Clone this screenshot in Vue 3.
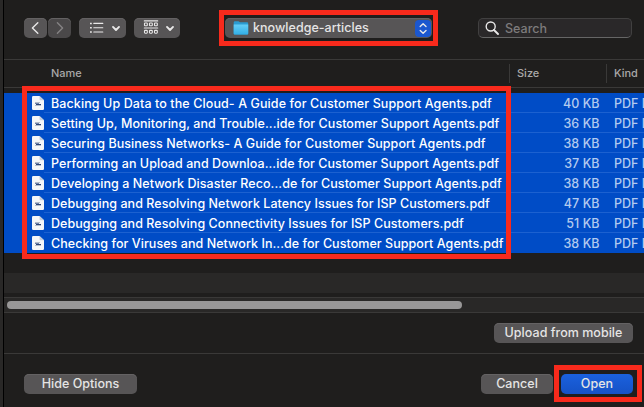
<script setup>
const files = [
  { name: 'Backing Up Data to the Cloud- A Guide for Customer Support Agents.pdf', size: '40 KB' },
  { name: 'Setting Up, Monitoring, and Trouble...ide for Customer Support Agents.pdf', size: '36 KB' },
  { name: 'Securing Business Networks- A Guide for Customer Support Agents.pdf', size: '38 KB' },
  { name: 'Performing an Upload and Downloa...ide for Customer Support Agents.pdf', size: '37 KB' },
  { name: 'Developing a Network Disaster Reco...de for Customer Support Agents.pdf', size: '38 KB' },
  { name: 'Debugging and Resolving Network Latency Issues for ISP Customers.pdf', size: '47 KB' },
  { name: 'Debugging and Resolving Connectivity Issues for ISP Customers.pdf', size: '51 KB' },
  { name: 'Checking for Viruses and Network In...de for Customer Support Agents.pdf', size: '38 KB' },
]
</script>

<template>
  <div class="window">
    <header class="toolbar">
      <button class="btn nav back">
        <svg width="23" height="20" viewBox="0 0 23 20"><path d="M13.8 4.8 8.4 10l5.4 5.2" class="stroke" /></svg>
      </button>
      <button class="btn nav forward">
        <svg width="23" height="20" viewBox="0 0 23 20"><path d="m9.4 4.8 5.2 5.2-5.2 5.2" class="stroke dim" /></svg>
      </button>
      <button class="btn view">
        <svg width="47" height="20" viewBox="0 0 47 20">
          <path d="M14.8 5.4h9M14.8 9.7h9M14.8 14h9" class="stroke thin" />
          <path d="M11 5.4h1.8M11 9.7h1.8M11 14h1.8" class="stroke bullet" />
          <path d="m34 8.9 3 3.1 3-3.1" class="stroke bold" />
        </svg>
      </button>
      <button class="btn group">
        <svg width="46" height="20" viewBox="0 0 46 20">
          <path d="M10.3 2.9h13.4M10.3 10h13.4" class="stroke thin" />
          <g class="stroke thin">
            <rect x="10.5" y="5" width="2.8" height="2.8" rx=".6" /><rect x="15.5" y="5" width="2.8" height="2.8" rx=".6" /><rect x="20.5" y="5" width="2.8" height="2.8" rx=".6" />
            <rect x="10.5" y="12.4" width="2.8" height="2.8" rx=".6" /><rect x="15.5" y="12.4" width="2.8" height="2.8" rx=".6" /><rect x="20.5" y="12.4" width="2.8" height="2.8" rx=".6" />
          </g>
          <path d="m33 8.9 3 3.1 3-3.1" class="stroke bold" />
        </svg>
      </button>
      <div class="popup">
        <svg class="folder" width="16" height="14" viewBox="0 0 16 14">
          <defs><linearGradient id="folderFace" x2="0" y2="1"><stop stop-color="#65cff7" /><stop offset="1" stop-color="#32aee5" /></linearGradient></defs>
          <path d="M.7 1.6Q.7.3 2 .3h3.5l1.5 1h7q1.2 0 1.2 1.2v10q0 1-1 1H1.7q-1 0-1-1z" fill="#2b9bd0" />
          <path d="M.7 3.4h14.5v9.1q0 1-1 1H1.7q-1 0-1-1z" fill="url(#folderFace)" />
        </svg>
        <span class="folder-name">knowledge-articles</span>
        <svg class="stepper" width="16" height="17" viewBox="0 0 16 17">
          <rect width="16" height="17" rx="4" fill="#1b57cf" />
          <path d="m5.2 6.6 2.9-2.8L11 6.6M5.2 10.5l2.9 2.8 2.9-2.8" class="stroke" />
        </svg>
        <div class="highlight"></div>
      </div>
      <div class="search">
        <svg width="14" height="14" viewBox="0 0 14 14"><circle cx="5.7" cy="5.5" r="4.5" class="stroke" /><path d="m9 9 4 4" class="stroke bold" /></svg>
        <span>Search</span>
      </div>
    </header>

    <div class="columns">
      <span class="col name">Name</span>
      <span class="col size">Size</span>
      <span class="col kind">Kind</span>
    </div>

    <main class="list">
      <div class="rows">
        <div v-for="file in files" :key="file.name" class="row">
          <svg class="doc" width="12" height="14" viewBox="0 0 12 14">
            <path d="M1.2 0h6.3L12 4.3v8.5q0 1.2-1.2 1.2H1.2Q0 14 0 12.8V1.2Q0 0 1.2 0z" fill="#f4f6f8" />
            <path d="M7.5 0v3.3q0 1 1 1H12z" fill="#c5cedb" />
            <path d="M3 6.5h5M3 9.5h6" stroke="#b4bdc9" stroke-width="1" />
            <path d="M3 7.5h4" stroke="#7184a8" stroke-width="1" />
            <path d="M4 8.5h5" stroke="#2c4577" stroke-width="1" />
          </svg>
          <div class="cells">
            <span class="file">{{ file.name }}</span>
            <span class="bytes">{{ file.size }}</span>
            <span class="type">PDF Document</span>
          </div>
        </div>
        <div class="highlight"></div>
      </div>
      <div class="stripe"></div>
    </main>

    <div class="track"><div class="thumb"></div></div>

    <div class="accessory"><button class="btn upload">Upload from mobile</button></div>

    <footer class="actions">
      <button class="btn hide">Hide Options</button>
      <button class="btn cancel">Cancel</button>
      <button class="btn open">Open<span class="highlight"></span></button>
    </footer>
  </div>
</template>

<style>
body { margin: 0; background: #1f1e1d; overflow: hidden; }
</style>

<style scoped>
* { box-sizing: border-box; }
.window {
  width: 644px; height: 407px; overflow: hidden;
  border-left: 3px solid #292827; box-shadow: inset 1px 0 #000;
  padding-left: 1px; background: #1f1e1d; color: #e5e4e4;
  font-family: Inter, "Liberation Sans", sans-serif; font-size: 12.5px; font-weight: 450; letter-spacing: .03px;
  display: flex; flex-direction: column;
}
svg { display: block; flex: none; }
.stroke { fill: none; stroke: #e9e8e8; stroke-width: 1.4; stroke-linecap: round; stroke-linejoin: round; }
.stroke.thin { stroke-width: 1.1; }
.stroke.bullet { stroke-width: 1.5; stroke-linecap: butt; }
.stroke.bold { stroke-width: 1.9; }
.stroke.dim { stroke: #858384; }
.btn {
  appearance: none; border: 0; margin: 0; padding: 0; height: 20px; border-radius: 5px;
  background: #575556; color: #e5e4e4; font: inherit; letter-spacing: inherit; line-height: 20px; text-align: center;
  box-shadow: inset 0 1px #646263; flex: none; white-space: nowrap;
}
.highlight { position: absolute; border: 5px solid #f82a1c; pointer-events: none; }
.toolbar { height: 60px; flex: none; display: flex; padding: 18px 0 0 20px; border-bottom: 1px solid #3a3938; }
.nav { width: 23px; }
.forward { margin-left: 1px; width: 23px; background: #4a4849; }
.view { width: 47px; margin-left: 8px; }
.group { width: 46px; margin-left: 8px; }
.popup {
  position: relative; width: 207px; height: 20px; margin-left: 45px; border-radius: 5px;
  background: #575556; box-shadow: inset 0 1px #646263; display: flex; align-items: center; padding: 0 1px 0 8px;
}
.popup .highlight { inset: -8px -6px -8px -6px; }
.folder-name { margin-left: 4px; flex: 1; white-space: nowrap; line-height: 20px; }
.search {
  width: 154px; height: 20px; margin-left: 46px; border: 1px solid #414040; border-bottom-color: #666; border-radius: 5px;
  background: #2a2829; display: flex; align-items: center; padding-left: 6px; gap: 6px; color: #7d7b7c;
}
.columns { height: 28px; flex: none; display: flex; align-items: center; border-bottom: 1px solid #3a3938; font-size: 11px; font-weight: 500; letter-spacing: 0; color: #aaa8a8; }
.col { height: 19px; line-height: 19px; }
.name { width: 505px; padding-left: 47px; flex: none; }
.size { width: 97px; padding-left: 7px; border-left: 1px solid #3a3938; flex: none; }
.kind { flex: 1; padding-left: 7px; border-left: 1px solid #3a3938; }
.list { height: 205px; flex: none; padding-top: 5px; }
.rows { position: relative; background: #004cc6; }
.rows .highlight { inset: -7px 133px -6px 18px; }
.row { height: 20px; display: flex; align-items: center; padding-left: 28px; }
.cells { flex: 1; min-width: 0; height: 20px; padding-left: 7px; display: flex; line-height: 21px; border-bottom: 1px solid #1c61d0; white-space: nowrap; overflow: hidden; }
.cells span { flex: none; }
.row:nth-child(8) .cells { border-bottom-color: transparent; }
.file { width: 481px; color: #fff; letter-spacing: .055px; }
.row:first-child .file { letter-spacing: .1px; }
.bytes { width: 67.5px; text-align: right; color: #b3caef; }
.type { margin-left: 14.5px; color: #b3caef; }
.stripe { height: 20px; margin-top: 20px; background: #292827; }
.track { height: 16px; margin-top: 4px; flex: none; background: #292827; border: solid #3a3938; border-width: 1px 0; padding: 3px 0 0 3px; }
.thumb { width: 455px; height: 8px; border-radius: 4px; background: #989797; }
.accessory { height: 41px; flex: none; display: flex; justify-content: flex-end; padding: 10px 11px 0 0; border-bottom: 1px solid #3a3938; }
.upload { width: 139px; }
.actions { display: flex; padding: 20px 11px 0 20px; }
.hide { width: 113px; }
.cancel { width: 72px; margin-left: auto; }
.open { position: relative; width: 72px; margin-left: 8px; background: linear-gradient(#1b61de, #1552c6); box-shadow: none; }
.open .highlight { inset: -9px -9px -8px -7px; }
</style>
